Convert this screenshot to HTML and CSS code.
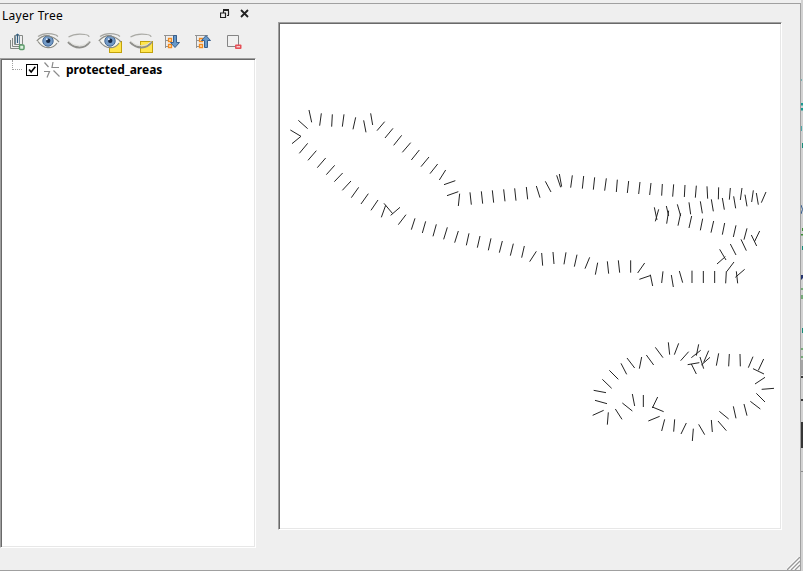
FILE: index.html
```html
<!DOCTYPE html>
<html lang="en">
<head>
<meta charset="utf-8">
<title>Layer Tree</title>
<link rel="stylesheet" href="styles.css">
</head>
<body>
<div class="app">
  <div class="window">
    <aside class="dock">
      <header class="titlebar">
        <span class="title">Layer Tree</span>
        <svg class="float" width="10" height="10" viewBox="0 0 10 10"><path d="M3 .5h6M3 1.5h6M3.5 2v2M8.5 2v4M7 6.500h2M0 4h6M.5 4v5M5.500 4v5M0 8.500h6" fill="none" stroke="#222" stroke-width="1.2"/></svg>
        <svg class="close" width="9" height="9" viewBox="0 0 9 9"><path d="M1 1l7 7M8 1l-7 7" stroke="#222" stroke-width="1.800"/></svg>
      </header>
      <div class="toolbar">
        <svg width="24" height="24" viewBox="0 0 24 24"><g fill="#eee" stroke="#858985" stroke-width="1"><path d="M9.500 6.500h8v9h-8zM7.500 9v8.500h8.500M5.500 11v8.500h9"/></g><path d="M10.500 15V8q0-3 2-3t2 3v7" fill="none" stroke="#6d8ba0" stroke-width="1"/><path d="M12.500 5v9" stroke="#315d80" stroke-width="1.200"/><rect x="14.500" y="16" width="4.500" height="4.500" rx="1" fill="#dcf1df" stroke="#5b9b69" stroke-width="1.500"/></svg>
        <svg width="24" height="24" viewBox="0 0 24 24"><use href="#eye"/></svg>
        <svg width="24" height="24" viewBox="0 0 24 24"><use href="#lid"/></svg>
        <svg width="24" height="24" viewBox="0 0 24 24"><rect x="11.500" y="12.500" width="12" height="11" fill="#ffe54d" stroke="#c2a20c"/><use href="#eye"/></svg>
        <svg width="24" height="24" viewBox="0 0 24 24"><rect x="11.500" y="12.500" width="12" height="11" fill="#ffe54d" stroke="#c2a20c"/><use href="#lid"/></svg>
        <svg width="24" height="24" viewBox="0 0 24 24"><use href="#branches"/><path d="M13.500 6.500h3v7h3l-4.500 5-4.500-5h3z" fill="#6799ca" stroke="#385f8d"/></svg>
        <svg width="24" height="24" viewBox="0 0 24 24"><use href="#branches"/><path d="M13.500 18.500h3v-7h3L15 6.500l-4.500 5h3z" fill="#6799ca" stroke="#385f8d"/></svg>
        <svg width="24" height="24" viewBox="0 0 24 24"><path d="M5.500 6.500h11v11h-11z" fill="#f1f1f1" stroke="#858585"/><rect x="13" y="15.500" width="6.500" height="4.500" rx="1" fill="#e55058"/><path d="M14.500 17.800h3.500" stroke="#fff"/></svg>
      </div>
      <div class="tree">
        <div class="node">
          <span class="branch"></span>
          <span class="check"><svg width="12" height="12" viewBox="0 0 12 12"><path d="M2.500 5.500l2.500 3 5-6.500" fill="none" stroke="#000" stroke-width="1.900"/></svg></span>
          <svg class="symbol" width="18" height="18" viewBox="0 0 18 18"><path d="M1.500 1.500l4 4.500M10 1l-1 5.500h7M1 10.500h5.500l-2.500 6M10.500 9.500l6 6" fill="none" stroke="#8b8b8b" stroke-width="1.200"/></svg>
          <span class="name">protected_areas</span>
        </div>
      </div>
    </aside>
    <main class="canvas">
      <svg class="map" width="500" height="504" viewBox="280 24 500 504" fill="none" stroke="#222" stroke-width="3">
        <g transform="translate(280 100) scale(.33333)"><path d="M31 90L63 109M36 131L63 109M55 61L83 86M87 30L95 67M124 40L119 77M157 43L155 80M192 43L187 80M227 52L219 88M251 61L258 97M272 40L278 75M314 65L291 92M339 85L315 114M365 106L341 136M392 128L367 157M58 160L83 130M84 181L109 152M112 203L137 174M139 224L164 196M163 245L188 219M187 271L213 243M214 293L236 262M243 312L265 281M273 331L294 300M304 352L317 316M312 310L338 341M332 346L360 322M355 374L378 344"/></g>
        <g transform="translate(380 130) scale(.33333)"><path d="M118 60L94 90M147 81L123 110M173 102L150 131M197 120L178 150M192 164L226 152M201 197L235 185M239 191L235 228M270 187L274 224M304 184L308 221M337 181L341 218M371 178L375 214M404 175L408 212M439 171L443 208M94 299L105 265M127 309L137 274M159 319L169 283M191 328L202 292M224 338L235 303M259 346L267 310M292 353L300 318M325 361L333 325M358 368L367 333M391 377L400 341M425 383L433 348"/></g>
        <g transform="translate(520 160) scale(.33333)"><path d="M49 78L60 113M76 64L93 96M110 46L122 82M118 42L125 80M157 46L152 83M191 48L187 86M224 52L220 89M259 55L254 92M292 59L289 96M326 63L322 99M360 66L356 102M29 305L49 274M65 279L68 317M99 276L102 312M138 277L132 313M171 284L163 320M209 292L195 326M233 308L226 344M262 304L266 341M295 301L299 338M332 301L332 338M353 339L374 309M358 358L393 346"/></g>
        <g transform="translate(640 170) scale(.33333)"><path d="M33 39L29 75M67 42L65 77M101 43L98 80M135 45L133 81M169 47L166 83M201 49L203 86M236 52L235 88M271 54L268 89M306 54L301 90M340 61L335 96M378 66L364 98M43 112L51 150M56 118L46 154M79 108L86 138M86 122L80 161M112 103L122 138M122 130L114 167M147 97L152 133M155 138L147 174M181 94L187 130M188 146L181 181M214 88L220 124M221 153L213 188M247 84L253 119M254 159L247 194M281 79L287 115M288 166L280 201M315 74L321 109M321 175L312 209M349 69L355 104M334 195L350 228M359 183L343 216M303 208L319 242M271 222L288 255M239 238L258 270M231 282L256 260M282 276L260 305M31 314L38 348M69 304L65 339M94 315L100 351M118 303L128 338M156 302L156 339M190 303L190 339M224 303L224 339M259 304L257 340M289 304L293 340M286 322L314 298"/></g>
        <g transform="translate(580 335) scale(.33333)"><path d="M265 22L269 59M296 25L283 59M326 50L302 77M199 60L221 90M226 37L249 68M185 66L178 101M141 69L164 99M123 85L140 118M88 106L115 133M67 133L95 160M41 166L78 173M45 196L81 206M38 241L71 226M85 232L82 269M106 222L126 253M127 204L157 228M157 177L164 213M190 180L190 216M233 186L217 219M217 216L251 230M205 258L239 244M254 253L245 288M284 253L281 290M319 264L303 297"/></g>
        <g transform="translate(670 335) scale(.33333)"><path d="M86 28L79 62M64 68L92 46M53 89L88 83M64 87L79 117M90 66L101 101M116 47L101 82M94 90L120 67M146 55L139 92M178 57L176 94M210 57L211 94M249 65L235 98M281 72L265 106M249 101L282 117M255 147L285 127M275 163L312 160M259 175L285 201M241 199L271 222M222 207L231 242M190 214L198 250M148 229L176 252M144 258L169 287M124 255L127 291M86 268L104 299M70 281L67 318"/></g>
      </svg>
    </main>
    <svg class="grip" width="13" height="13" viewBox="0 0 13 13"><path d="M0 13L13 0M4 13l9-9M8 13l5-5" stroke="#fff" stroke-width="3"/><path d="M0 13L13 0M4 13l9-9M8 13l5-5" stroke="#999" stroke-width="1.400"/></svg>
  </div>
  <svg class="behind" width="3" height="571" viewBox="0 0 3 571">
    <path d="M0 79h1v2H0z" fill="#75b5b5"/>
    <path d="M0 103h2v2.500H0zM0 108h2v2.500H0z" fill="#169a91"/>
    <path d="M0 126h1v5H0z" fill="#4daaaa"/>
    <path d="M1 143h2v5H1z" fill="#168c78"/>
    <path d="M2 172h1v2H2zM2 175h1v2H2z" fill="#a57c32"/>
    <path d="M0 205q3 4 0 9" fill="none" stroke="#345d91"/>
    <path d="M1 228h2v3H1zM0 234h3v1.500H0z" fill="#3b8c34"/>
    <path d="M1 246h2v4H1z" fill="#168c78"/>
    <path d="M0 275h2v3l-2 2z" fill="#23336e"/>
    <path d="M0 289h2.500v7H0M0 298h3M0 349h2.500v8H0" fill="none" stroke="#16801d"/>
    <path d="M1 328h2v5H1z" fill="#168c78"/>
    <path d="M0 360h3v15H0z" fill="#a5a5a5"/>
    <path d="M0 376h3v2H0zM0 399h3v2H0zM0 422h3v26H0z" fill="#353535"/>
    <path d="M0 471h3v1H0z" fill="#8b8b8b"/>
  </svg>
</div>
<svg class="defs" width="0" height="0">
  <defs>
    <g id="eye"><path d="M2 12Q7 6 14 7.500T22 13Q18 18 12 18.500T2 12z" fill="#f5f5f0"/><circle cx="12" cy="12" r="5.200" fill="#739ac6" stroke="#456996"/><circle cx="12.200" cy="11.800" r="2.200" fill="#162844"/><circle cx="10.800" cy="10.200" r="1" fill="#dceaff"/><path d="M.8 12Q7 5.500 13 7t10 6M2 12.500q4 6 10 6.200t9-4.700" fill="none" stroke="#8c8c85" stroke-width="1.200"/><path d="M2 7.500Q9 2.500 20 6l2 1.500" fill="none" stroke="#a5a5a0" stroke-width="1.200"/></g>
    <g id="lid"><path d="M1.500 8Q8 4 18 5.500q4 .5 4 2.500" fill="none" stroke="#aaaaa5" stroke-width="1.200"/><path d="M1 13q5 5.500 11.500 5.500T23 12.500" fill="none" stroke="#8f8f8b" stroke-width="2"/><path d="M1.500 12.300q5 4.500 11 4.500t10-4.500" fill="none" stroke="#deded9"/></g>
    <g id="branches"><path d="M4 6.500h13M5.500 6v13M5.500 11.500h4M5.500 17.500h4" fill="none" stroke="#929292"/><path d="M8.500 9.500h3v3h-3zM8.500 15.500h3v3h-3z" fill="#fff0cf" stroke="#f28b20" stroke-width="1.300"/></g>
  </defs>
</svg>
</body>
</html>
```
FILE: styles.css
```css
* { box-sizing: border-box; }
body { margin: 0; overflow: hidden; background: #efefef; font-family: "Noto Sans", "Open Sans", sans-serif; font-size: 12px; color: #000; }
svg { display: block; }
.app { display: flex; width: 803px; height: 571px; padding-top: 3px; background: #efefef; overflow: hidden; }
.window { position: relative; display: flex; flex: none; width: 801px; height: 568px; gap: 22px; border: solid #a0a0a0; border-width: 1px 1px 1px 0; background: #efefef; }
.dock { display: flex; flex-direction: column; width: 256px; }
.titlebar { display: flex; align-items: center; height: 19px; padding: 0 7px 0 2px; }
.title { flex: 1; line-height: 19px; padding-top: 3px; letter-spacing: .28px; }
.close { margin-left: 10px; }
.toolbar { display: flex; gap: 7px; height: 35px; padding: 6px 0 0 5px; }
.tree, .canvas { border: 1px solid; border-color: #a0a0a0 #fff #fff #a0a0a0; padding: 1px; background: #fff; box-shadow: inset 1px 1px #696969, inset -1px -1px #e7e7e7; }
.tree { height: 490px; }
.node { display: flex; align-items: center; height: 20px; padding-left: 10px; }
.branch { width: 10px; height: 10px; margin: -10px 4px 0 0; border: dotted #a0a0a0; border-width: 0 0 1px 1px; }
.check { width: 12px; height: 12px; border: 1px solid #000; }
.check svg { width: 10px; height: 10px; }
.symbol { margin-left: 5px; }
.name { margin-left: 5px; font-weight: 700; line-height: 20px; letter-spacing: 0; }
.canvas { width: 504px; height: 508px; margin-top: 18px; }
.grip { position: absolute; right: 0; bottom: 0; }
.behind { flex: none; width: 3px; margin-top: -3px; background: #d2d2d2; }
.defs { position: absolute; }
```
